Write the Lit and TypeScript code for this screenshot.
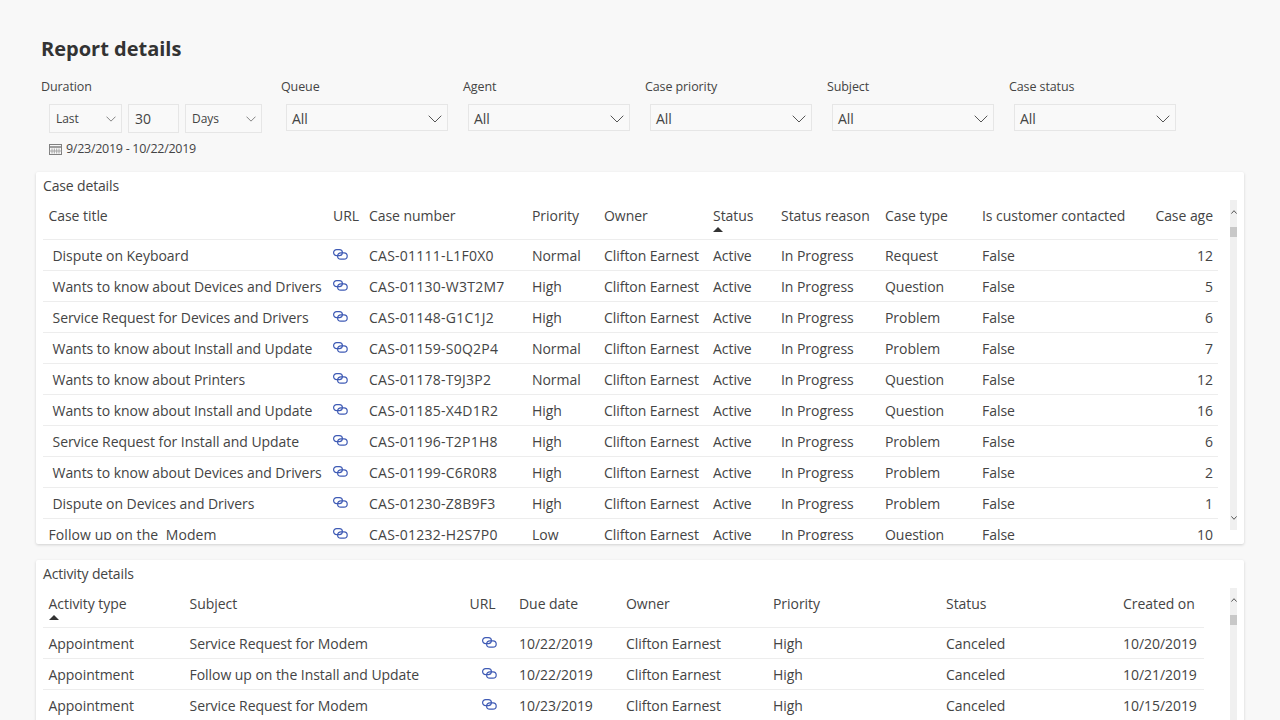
import { LitElement, html, css } from "lit";
import { customElement } from "lit/decorators.js";

const chevron = (w: number, h: number) => html`<svg class="chev" width=${w} height=${h} viewBox="0 0 14 8"><path d="M.7.7 7 7 13.3.7" fill="none" stroke="#555" stroke-width="1"/></svg>`;
const link = html`<svg class="link" width="15" height="11" viewBox="0 0 15 11" fill="none" stroke="#3f5bb5" stroke-width="1.2"><rect x=".6" y=".6" width="8.800" height="6" rx="3"/><rect x="4.600" y="3.800" width="9.600" height="6.400" rx="3.200"/></svg>`;
const calendar = html`<svg width="13" height="12" viewBox="0 0 13 12" fill="none" stroke="#808080" stroke-width="1"><rect x=".5" y="1.500" width="12" height="10"/><path d="M.5 4h12" stroke-width="1.500"/><path d="M3 5.500v5M5.300 5.500v5M7.700 5.500v5M10 5.500v5M.5 8h12" stroke="#a6a6a6"/></svg>`;

const cases = [
  ["Dispute on Keyboard", "CAS-01111-L1F0X0", "Normal", "Active", "Request", "12"],
  ["Wants to know about Devices and Drivers", "CAS-01130-W3T2M7", "High", "Active", "Question", "5"],
  ["Service Request for Devices and Drivers", "CAS-01148-G1C1J2", "High", "Active", "Problem", "6"],
  ["Wants to know about Install and Update", "CAS-01159-S0Q2P4", "Normal", "Active", "Problem", "7"],
  ["Wants to know about Printers", "CAS-01178-T9J3P2", "Normal", "Active", "Question", "12"],
  ["Wants to know about Install and Update", "CAS-01185-X4D1R2", "High", "Active", "Question", "16"],
  ["Service Request for Install and Update", "CAS-01196-T2P1H8", "High", "Active", "Problem", "6"],
  ["Wants to know about Devices and Drivers", "CAS-01199-C6R0R8", "High", "Active", "Problem", "2"],
  ["Dispute on Devices and Drivers", "CAS-01230-Z8B9F3", "High", "Active", "Problem", "1"],
  ["Follow up on the  Modem", "CAS-01232-H2S7P0", "Low", "Active", "Question", "10"],
];
const activities = [
  ["Service Request for Modem", "10/22/2019", "10/20/2019"],
  ["Follow up on the Install and Update", "10/22/2019", "10/21/2019"],
  ["Service Request for Modem", "10/23/2019", "10/15/2019"],
];
const filters = ["Queue", "Agent", "Case priority", "Subject", "Case status"];

@customElement("app-root")
export class AppRoot extends LitElement {
  static styles = css`
    :host { display: block; height: 720px; overflow: hidden; background: #f8f8f8; color: #444;
      font-family: "Open Sans", sans-serif; font-size: 14px; line-height: 20px; letter-spacing: -0.05px; }
    .page { padding: 36px 36px 0; }
    h1 { margin: 0 0 0 5px; font-size: 20px; line-height: 26px; font-weight: 700; color: #333; letter-spacing: 0; }
    .filters { display: flex; margin: 16px 0 0 5px; height: 94px; }
    .filter { width: 182px; }
    .filter.dur { width: 240px; }
    .flabel { font-size: 12.5px; line-height: 18px; height: 18px; letter-spacing: -0.1px; }
    .fields { display: flex; gap: 6px; margin: 8px 0 0 8px; }
    .sel { box-sizing: border-box; display: flex; align-items: center; justify-content: space-between;
      border: 1px solid #e6e6e6; background: #f9f9f9; height: 29px; padding: 1px 5px 0 6px; font-size: 12px; }
    .sel.last { width: 73px; }
    .sel.num { width: 51px; font-size: 14px; }
    .sel.days { width: 77px; }
    .sel.big { width: 162px; height: 27px; margin: 8px 0 0 5px; font-size: 14px; padding: 2px 5px 0 5px; }
    .date { display: flex; align-items: center; gap: 4px; margin: 7px 0 0 8px; font-size: 12.5px; line-height: 18px; letter-spacing: -0.28px; }
    .card { background: #fff; border-radius: 2px; box-shadow: 0 1px 3px rgba(0,0,0,.16); padding: 4px 7px 4px; margin-bottom: 16px; }
    .ctitle { font-size: 14px; line-height: 20px; height: 24px; letter-spacing: -0.15px; }
    .body { display: flex; height: 340px; }
    .tbl { overflow: hidden; flex: none; }
    .case .tbl { width: 1175px; }
    .act .tbl { width: 1161px; }
    .act .body { height: 200px; }
    .row { display: grid; height: 31px; box-sizing: border-box; border-bottom: 1px solid #ededed; align-items: center; padding-top: 2px; }
    .head { height: 40px; align-items: start; padding-top: 6px; }
    .case .row { grid-template-columns: 285px 36px 163px 72px 109px 68px 104px 97px 1fr 70px; }
    .act .row { grid-template-columns: 141.500px 280px 49.500px 107px 147px 173px 177px 1fr; }
    .c { padding-left: 5px; white-space: pre; }
    .c:first-child { padding-left: 5.5px; }
    .c.indent { padding-left: 9.5px; }
    .code { letter-spacing: 0.24px; }
    .wide { letter-spacing: 0.08px; }
    .right { text-align: right; padding-right: 5px; }
    .cr { display: flex; flex-direction: column; align-items: flex-start; }
    .tri { width: 0; height: 0; border-left: 5px solid transparent; border-right: 5px solid transparent; border-bottom: 5px solid #333; margin-top: 1px; }
    .link { display: block; margin-top: -3px; }
    .act .link { margin-left: 12px; }
    .sb { position: relative; flex: none; width: 7px; height: 330px; background: #f0f0f0; }
    .case .sb { margin-left: 12px; }
    .act .sb { margin-left: 26px; }
    .thumb { height: 10px; top: 27px; background: #c8c8c8; position: absolute; left: 0; right: 0; }
    .up, .down { position: absolute; left: 1px; }
    .up { top: 10px; transform: scaleY(-1); }
    .down { bottom: 10px; }
  `;

  scrollbar() {
    return html`<div class="sb"><div class="thumb"></div>
      <svg class="up" width="6" height="4" viewBox="0 0 6 4"><path d="M.4.4 3 3.300 5.600.4" fill="none" stroke="#555"/></svg>
      <svg class="down" width="6" height="4" viewBox="0 0 6 4"><path d="M.4.4 3 3.300 5.600.4" fill="none" stroke="#555"/></svg>
    </div>`;
  }

  render() {
    const ch = ["Case title", "URL", "Case number", "Priority", "Owner", "Status", "Status reason", "Case type", "Is customer contacted"];
    const ah = ["Activity type", "Subject", "URL", "Due date", "Owner", "Priority", "Status", "Created on"];
    return html`<div class="page">
      <h1>Report details</h1>
      <div class="filters">
        <div class="filter dur">
          <div class="flabel">Duration</div>
          <div class="fields">
            <div class="sel last"><span>Last</span>${chevron(10, 6)}</div>
            <div class="sel num">30</div>
            <div class="sel days"><span>Days</span>${chevron(10, 6)}</div>
          </div>
          <div class="date">${calendar}<span>9/23/2019 - 10/22/2019</span></div>
        </div>
        ${filters.map(f => html`<div class="filter"><div class="flabel">${f}</div>
          <div class="sel big"><span>All</span>${chevron(14, 8)}</div></div>`)}
      </div>

      <section class="card case">
        <div class="ctitle">Case details</div>
        <div class="body">
          <div class="tbl">
            <div class="row head">
              ${ch.map(h => html`<div class="c cr">${h}${h === "Status" ? html`<div class="tri"></div>` : ""}</div>`)}
              <div class="c right">Case age</div>
            </div>
            ${cases.map((r, i) => html`<div class="row">
              <div class="c ${i < 9 ? "indent" : "wide"}">${r[0]}</div>
              <div class="c">${link}</div>
              <div class="c code">${r[1]}</div>
              <div class="c">${r[2]}</div>
              <div class="c">Clifton Earnest</div>
              <div class="c">${r[3]}</div>
              <div class="c">In Progress</div>
              <div class="c">${r[4]}</div>
              <div class="c">False</div>
              <div class="c right">${r[5]}</div>
            </div>`)}
          </div>
          ${this.scrollbar()}
        </div>
      </section>

      <section class="card act">
        <div class="ctitle">Activity details</div>
        <div class="body">
          <div class="tbl">
            <div class="row head">
              ${ah.map(h => html`<div class="c cr">${h}${h === "Activity type" ? html`<div class="tri"></div>` : ""}</div>`)}
            </div>
            ${activities.map(r => html`<div class="row">
              <div class="c">Appointment</div>
              <div class="c">${r[0]}</div>
              <div class="c">${link}</div>
              <div class="c">${r[1]}</div>
              <div class="c">Clifton Earnest</div>
              <div class="c">High</div>
              <div class="c">Canceled</div>
              <div class="c">${r[2]}</div>
            </div>`)}
          </div>
          ${this.scrollbar()}
        </div>
      </section>
    </div>`;
  }
}
